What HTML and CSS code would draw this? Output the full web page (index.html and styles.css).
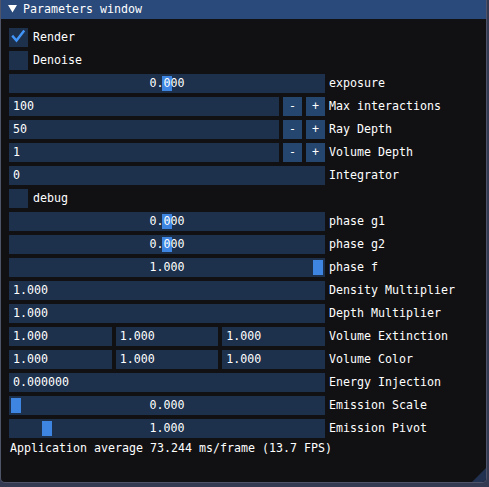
FILE: index.html
```html
<!DOCTYPE html>
<html>
<head>
<meta charset="utf-8">
<link rel="stylesheet" href="styles.css">
</head>
<body>
<div class="window">
  <div class="title">
    <svg class="arrow" width="9" height="8" viewBox="0 0 9 8"><polygon points="0,0 9,0 4.5,7.5" fill="#fff"/></svg>
    <span>Parameters window</span>
  </div>
  <div class="content">
    <div class="row"><div class="check"><svg width="19" height="19" viewBox="0 0 19 19"><polyline points="4,8.5 7.5,12.5 14.5,3.5" fill="none" stroke="#4296fa" stroke-width="2.4" stroke-linecap="square"/></svg></div><span class="clabel">Render</span></div>
    <div class="row"><div class="check"></div><span class="clabel">Denoise</span></div>
    <div class="row"><div class="frame slider"><div class="grab" style="left:153px"></div><span class="val">0.000</span></div><span class="label">exposure</span></div>
    <div class="row"><div class="frame input short"><span>100</span></div><div class="btn">-</div><div class="btn">+</div><span class="label">Max interactions</span></div>
    <div class="row"><div class="frame input short"><span>50</span></div><div class="btn">-</div><div class="btn">+</div><span class="label">Ray Depth</span></div>
    <div class="row"><div class="frame input short"><span>1</span></div><div class="btn">-</div><div class="btn">+</div><span class="label">Volume Depth</span></div>
    <div class="row"><div class="frame input"><span>0</span></div><span class="label">Integrator</span></div>
    <div class="row"><div class="check"></div><span class="clabel">debug</span></div>
    <div class="row"><div class="frame slider"><div class="grab" style="left:153px"></div><span class="val">0.000</span></div><span class="label">phase g1</span></div>
    <div class="row"><div class="frame slider"><div class="grab" style="left:153px"></div><span class="val">0.000</span></div><span class="label">phase g2</span></div>
    <div class="row"><div class="frame slider"><div class="grab" style="left:304px"></div><span class="val">1.000</span></div><span class="label">phase f</span></div>
    <div class="row"><div class="frame input"><span>1.000</span></div><span class="label">Density Multiplier</span></div>
    <div class="row"><div class="frame input"><span>1.000</span></div><span class="label">Depth Multiplier</span></div>
    <div class="row"><div class="triple"><div class="frame input"><span>1.000</span></div><div class="frame input"><span>1.000</span></div><div class="frame input"><span>1.000</span></div></div><span class="label">Volume Extinction</span></div>
    <div class="row"><div class="triple"><div class="frame input"><span>1.000</span></div><div class="frame input"><span>1.000</span></div><div class="frame input"><span>1.000</span></div></div><span class="label">Volume Color</span></div>
    <div class="row"><div class="frame input"><span>0.000000</span></div><span class="label">Energy Injection</span></div>
    <div class="row"><div class="frame slider"><div class="grab" style="left:2px"></div><span class="val">0.000</span></div><span class="label">Emission Scale</span></div>
    <div class="row"><div class="frame slider"><div class="grab" style="left:33px"></div><span class="val">1.000</span></div><span class="label">Emission Pivot</span></div>
    <div class="text">Application average 73.244 ms/frame (13.7 FPS)</div>
  </div>
  <div class="grip"></div>
</div>
</body>
</html>
```
FILE: styles.css
```css
html, body {
  margin: 0;
  padding: 0;
  background: #333a52;
  width: 489px;
  height: 487px;
  overflow: hidden;
}
body {
  font-family: "DejaVu Sans Mono", "Liberation Mono", monospace;
  font-size: 11.63px;
  line-height: 13px;
  color: #ffffff;
}
.window {
  position: relative;
  margin-left: 1px;
  width: 485px;
  height: 482px;
  background: #111114;
  box-shadow: 0 0 0 1px rgba(110, 110, 128, 0.5);
  border-radius: 0 0 4px 4px;
  display: flex;
  flex-direction: column;
}
.title {
  height: 19px;
  background: #294a7a;
  display: flex;
  align-items: center;
  flex: none;
}
.arrow {
  margin-left: 7px;
  margin-right: 6px;
  margin-top: -1px;
}
.content {
  padding: 9px 8px 8px;
  display: flex;
  flex-direction: column;
  gap: 4px;
}
.row {
  display: flex;
  align-items: center;
  gap: 4px;
  height: 19px;
}
.check {
  width: 19px;
  height: 19px;
  background: #1e314c;
  flex: none;
}
.check svg { display: block; }
.clabel { margin-left: 1px; }
.frame {
  position: relative;
  width: 316px;
  height: 19px;
  background: #1e314c;
  flex: none;
  display: flex;
  align-items: center;
  box-sizing: border-box;
}
.frame.input { padding-left: 4px; }
.frame.short { width: 270px; }
.slider { justify-content: center; }
.val { position: relative; }
.grab {
  position: absolute;
  top: 2px;
  width: 10px;
  height: 15px;
  background: #3d85e0;
}
.btn {
  width: 19px;
  height: 19px;
  background: #25466e;
  flex: none;
  display: flex;
  align-items: center;
  justify-content: center;
}
.label { margin-left: 0; white-space: nowrap; }
.triple {
  width: 316px;
  display: grid;
  grid-template-columns: 1fr 1fr 1fr;
  gap: 4px;
  flex: none;
}
.triple .frame { width: auto; }
.text { margin-top: 0; height: 13px; padding-left: 1px; }
.grip {
  position: absolute;
  right: 0;
  bottom: 0;
  width: 0;
  height: 0;
  border-style: solid;
  border-width: 0 0 14px 14px;
  border-color: transparent transparent #223150 transparent;
  border-bottom-right-radius: 4px;
}
```
